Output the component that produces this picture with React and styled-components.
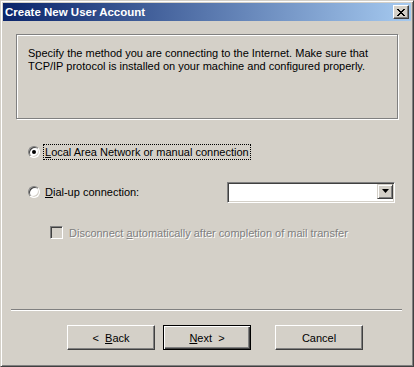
import React from 'react';
import styled, { createGlobalStyle } from 'styled-components';

const GlobalStyle = createGlobalStyle`
  html, body {
    margin: 0;
    padding: 0;
    background: #d4d0c8;
  }
  body {
    font-family: 'Liberation Sans', Arial, sans-serif;
    font-size: 11px;
    color: #000;
  }
`;

const App = () => {
  return (
    <>
      <GlobalStyle />
      <Window>
        <TitleBar>
          <TitleText>Create New User Account</TitleText>
          <CloseButton aria-label="Close">
            <svg width="8" height="7" viewBox="0 0 8 7">
              <path d="M0 0h2v1h1v1h2V1h1V0h2v1H7v1H6v1H5v1h1v1h1v1h1v1H6V6H5V5H3v1H2v1H0V6h1V5h1V4h1V3H2V2H1V1H0z" fill="#000" />
            </svg>
          </CloseButton>
        </TitleBar>

        <Body>
          <InfoPanel>
            Specify the method you are connecting to the Internet. Make sure that
            <br />
            TCP/IP protocol is installed on your machine and configured properly.
          </InfoPanel>

          <Options>
            <OptionRow $top={25}>
              <Radio $checked />
              <FocusLabel>
                <u>L</u>ocal Area Network or manual connection
              </FocusLabel>
            </OptionRow>

            <OptionRow $top={24}>
              <Radio />
              <Label>
                <u>D</u>ial-up connection:
              </Label>
              <Combo>
                <ComboField />
                <ComboButton>
                  <svg width="7" height="4" viewBox="0 0 7 4">
                    <path d="M0 0h7L3.5 4z" fill="#000" />
                  </svg>
                </ComboButton>
              </Combo>
            </OptionRow>

            <CheckRow>
              <CheckBox />
              <DisabledLabel>
                Disconnect <u>a</u>utomatically after completion of mail transfer
              </DisabledLabel>
            </CheckRow>
          </Options>

          <Separator />

          <ButtonRow>
            <Button>
              &lt;&nbsp;&nbsp;<u>B</u>ack
            </Button>
            <Button $default>
              <u>N</u>ext&nbsp;&nbsp;&gt;
            </Button>
            <Button $space={16}>Cancel</Button>
          </ButtonRow>
        </Body>
      </Window>
    </>
  );
};

export default App;

const Window = styled.div`
  box-sizing: border-box;
  width: 414px;
  height: 367px;
  padding: 2px;
  display: flex;
  flex-direction: column;
  background: #d4d0c8;
  border-top: 1px solid #d4d0c8;
  border-left: 1px solid #d4d0c8;
  border-right: 1px solid #404040;
  border-bottom: 1px solid #404040;
  box-shadow: inset 1px 1px 0 #fff, inset -1px -1px 0 #808080;
`;

const TitleBar = styled.div`
  height: 18px;
  flex-shrink: 0;
  display: flex;
  align-items: center;
  justify-content: space-between;
  padding: 0 2px 0 2px;
  background: linear-gradient(to right, #0a246a, #a6caf0);
`;

const TitleText = styled.span`
  color: #fff;
  font-weight: bold;
  font-size: 11.5px;
`;

const CloseButton = styled.div`
  box-sizing: border-box;
  width: 16px;
  height: 14px;
  display: flex;
  align-items: center;
  justify-content: center;
  background: #d4d0c8;
  border-top: 1px solid #fff;
  border-left: 1px solid #fff;
  border-right: 1px solid #404040;
  border-bottom: 1px solid #404040;
  box-shadow: inset -1px -1px 0 #808080;
`;

const Body = styled.div`
  flex: 1;
  display: flex;
  flex-direction: column;
  padding: 13px 0 0;
`;

const InfoPanel = styled.div`
  box-sizing: border-box;
  margin: 0 13px 0 13px;
  height: 85px;
  padding: 12px 11px;
  line-height: 13px;
  border: 1px solid #808080;
  box-shadow: inset 1px 1px 0 #fff, 1px 1px 0 #fff;
`;

const Options = styled.div`
  display: flex;
  flex-direction: column;
  padding-left: 25px;
`;

const OptionRow = styled.div`
  display: flex;
  align-items: center;
  height: 16px;
  margin-top: ${(p) => p.$top}px;
`;

const Radio = styled.span`
  position: relative;
  box-sizing: border-box;
  width: 12px;
  height: 12px;
  flex-shrink: 0;
  border-radius: 50%;
  background: #fff;
  border: 1px solid;
  border-color: #808080 #fff #fff #808080;
  box-shadow: inset 1px 1px 0 #404040, inset -1px -1px 0 #d4d0c8;
  margin-right: 5px;

  &::after {
    content: '';
    display: ${(p) => (p.$checked ? 'block' : 'none')};
    position: absolute;
    left: 3px;
    top: 3px;
    width: 4px;
    height: 4px;
    border-radius: 50%;
    background: #000;
  }
`;

const Label = styled.span`
  white-space: nowrap;
  line-height: 14px;
`;

const FocusLabel = styled(Label)`
  outline: 1px dotted #000;
  padding: 0 1px;
  margin-left: -1px;
`;

const Combo = styled.div`
  box-sizing: border-box;
  display: flex;
  width: 168px;
  height: 21px;
  margin-left: auto;
  margin-right: 16px;
  padding: 2px;
  background: #fff;
  border: 1px solid;
  border-color: #808080 #fff #fff #808080;
  box-shadow: inset 1px 1px 0 #404040, inset -1px -1px 0 #d4d0c8;
`;

const ComboField = styled.div`
  flex: 1;
`;

const ComboButton = styled.div`
  box-sizing: border-box;
  width: 16px;
  height: 15px;
  display: flex;
  align-items: center;
  justify-content: center;
  background: #d4d0c8;
  border-top: 1px solid #d4d0c8;
  border-left: 1px solid #d4d0c8;
  border-right: 1px solid #404040;
  border-bottom: 1px solid #404040;
  box-shadow: inset 1px 1px 0 #fff, inset -1px -1px 0 #808080;
  margin: -1px -1px 0 0;
`;

const CheckRow = styled.div`
  display: flex;
  align-items: center;
  margin-top: 25px;
  padding-left: 22px;
  height: 15px;
`;

const CheckBox = styled.span`
  box-sizing: border-box;
  width: 13px;
  height: 13px;
  flex-shrink: 0;
  background: #d4d0c8;
  border: 1px solid;
  border-color: #808080 #fff #fff #808080;
  box-shadow: inset 1px 1px 0 #404040, inset -1px -1px 0 #d4d0c8;
  margin-right: 6px;
`;

const DisabledLabel = styled.span`
  white-space: nowrap;
  color: #808080;
  text-shadow: 1px 1px 0 #fff;
`;

const Separator = styled.div`
  margin: 69px 9px 0 8px;
  height: 0;
  border-top: 1px solid #808080;
  border-bottom: 1px solid #fff;
`;

const ButtonRow = styled.div`
  display: flex;
  gap: 8px;
  padding-left: 64px;
  margin-top: 14px;
`;

const Button = styled.div`
  box-sizing: border-box;
  width: 88px;
  height: 25px;
  margin-left: ${(p) => p.$space || 0}px;
  display: flex;
  align-items: center;
  justify-content: center;
  white-space: nowrap;
  background: #d4d0c8;
  border-top: 1px solid ${(p) => (p.$default ? '#000' : '#fff')};
  border-left: 1px solid ${(p) => (p.$default ? '#000' : '#fff')};
  border-right: 1px solid ${(p) => (p.$default ? '#000' : '#404040')};
  border-bottom: 1px solid ${(p) => (p.$default ? '#000' : '#404040')};
  box-shadow: ${(p) =>
    p.$default
      ? 'inset 1px 1px 0 #fff, inset -1px -1px 0 #404040, inset -2px -2px 0 #808080'
      : 'inset -1px -1px 0 #808080'};
`;
